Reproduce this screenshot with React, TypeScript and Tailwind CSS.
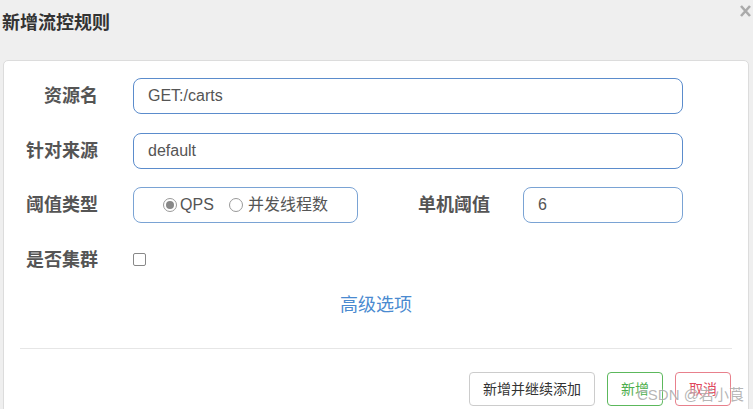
import React from "react";

const font = { fontFamily: '"Liberation Sans","Noto Sans CJK SC",sans-serif' };

function Label({ text, w }: { text: string; w: string }) {
  return (
    <div className={`${w} shrink-0 text-right text-[18px] font-bold text-[#555] leading-[36px]`}>{text}</div>
  );
}

function Radio({ checked }: { checked?: boolean }) {
  return (
    <span className="flex h-[14px] w-[14px] items-center justify-center rounded-full border border-[#999] bg-white">
      {checked && <span className="h-[8px] w-[8px] rounded-full bg-[#888]" />}
    </span>
  );
}

export default function App() {
  return (
    <div className="relative h-[409px] w-[753px] overflow-hidden bg-[#efefef]" style={font}>
      <div className="flex h-[60px] items-start justify-between">
        <div className="ml-[2px] mt-[11px] text-[18px] font-bold leading-[24px] text-[#333]">新增流控规则</div>
        <svg className="mr-[2px] mt-[5px]" width="11" height="12" viewBox="0 0 11 12">
          <path d="M1 1 L10 11 M10 1 L1 11" stroke="#aaa" strokeWidth="2.6" />
        </svg>
      </div>

      <div className="ml-[3px] mr-[4px] h-[360px] rounded-t-[5px] border border-[#dcdcdc] bg-white">
        <div className="flex flex-col gap-[18.5px] pt-[17px]">
          <div className="flex h-[36px] items-center">
            <Label text="资源名" w="w-[94px]" />
            <div className="ml-[35px] flex h-[36px] w-[550px] items-center rounded-[8px] border border-[#5b8ccc] pl-[14px] text-[16px] text-[#555]">
              GET:/carts
            </div>
          </div>
          <div className="flex h-[36px] items-center">
            <Label text="针对来源" w="w-[94px]" />
            <div className="ml-[35px] flex h-[36px] w-[550px] items-center rounded-[8px] border border-[#5b8ccc] pl-[14px] text-[16px] text-[#555]">
              default
            </div>
          </div>
          <div className="flex h-[36px] items-center">
            <Label text="阈值类型" w="w-[94px]" />
            <div className="ml-[35px] flex h-[36px] w-[225px] items-center justify-center rounded-[8px] border border-[#7aa3d4] text-[16px] text-[#555]">
              <Radio checked />
              <span className="ml-[3px]">QPS</span>
              <span className="ml-[15px]">
                <Radio />
              </span>
              <span className="ml-[5px]">并发线程数</span>
            </div>
            <Label text="单机阈值" w="w-[132px]" />
            <div className="ml-[33px] flex h-[36px] w-[160px] items-center rounded-[8px] border border-[#7aa3d4] pl-[14px] text-[16px] text-[#555]">
              6
            </div>
          </div>
          <div className="flex h-[36px] items-center">
            <Label text="是否集群" w="w-[94px]" />
            <span className="ml-[35px] h-[13px] w-[13px] rounded-[2px] border border-[#888] bg-white" />
          </div>
        </div>
        <div className="mt-[15.5px] text-center text-[18px] leading-[24px] text-[#4a8ad0]">高级选项</div>
        <div className="mx-[16px] mt-[31px] h-px bg-[#e6e6e6]" />
        <div className="mt-[23px] flex justify-end gap-[12px] pr-[17px]">
          <button className="h-[34px] w-[126px] rounded-[4px] border border-[#ccc] bg-white text-[14px] text-[#333]">
            新增并继续添加
          </button>
          <button className="h-[34px] w-[56px] rounded-[4px] border border-[#5cb85c] bg-white text-[14px] text-[#4cae4c]">
            新增
          </button>
          <button className="h-[34px] w-[56px] rounded-[4px] border border-[#e8808c] bg-white text-[14px] text-[#e0475a]">
            取消
          </button>
        </div>
      </div>

      <div
        className="absolute left-[637px] top-[386px] text-[15px] leading-[18px] text-[rgba(150,150,150,0.7)]"
        style={{ textShadow: "0 0 2px #fff" }}
      >
        CSDN @岩小莨
      </div>
    </div>
  );
}
